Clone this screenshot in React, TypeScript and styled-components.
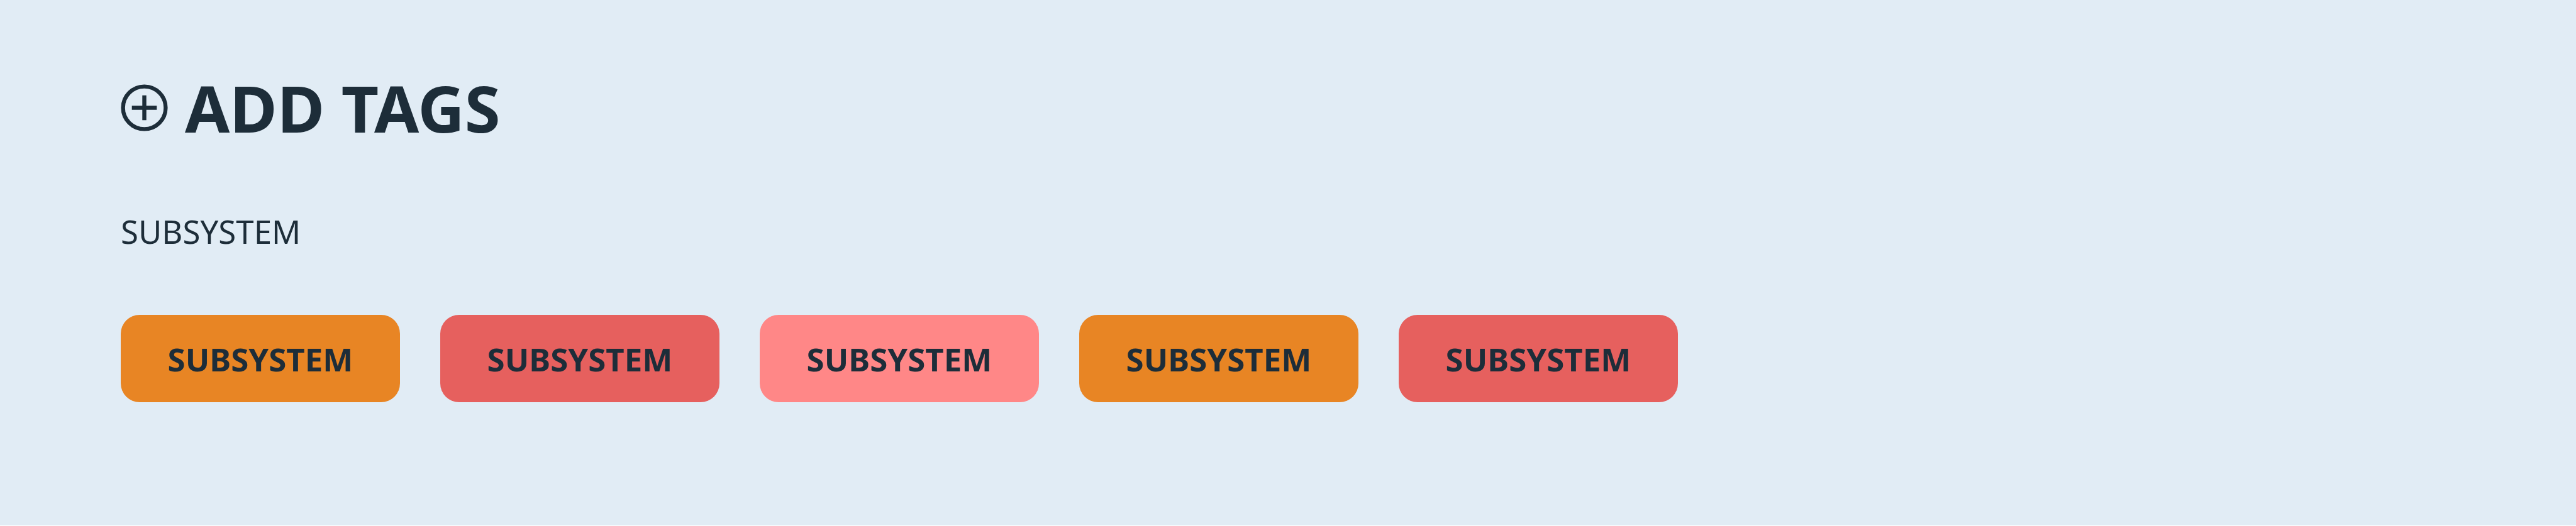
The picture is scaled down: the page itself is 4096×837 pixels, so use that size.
import React from "react";
import styled, { createGlobalStyle } from "styled-components";

const GlobalStyle = createGlobalStyle`
  body { margin: 0; background: #ffffff; }
  * { box-sizing: border-box; }
`;

const Panel = styled.section`
  padding: 117px 192px 196px;
  background: #e1ecf5;
  color: #1d2d39;
  font-family: "Noto Sans", sans-serif;
`;

const AddButton = styled.button`
  display: flex;
  align-items: center;
  gap: 27px;
  padding: 0;
  border: 0;
  background: none;
  color: inherit;
  font: 700 103px/108px "Noto Sans", sans-serif;
  cursor: pointer;
`;

const GroupTitle = styled.h3`
  margin: 107px 0 97px;
  font-size: 51px;
  line-height: 72px;
  font-weight: 400;
`;

const TagRow = styled.div`
  display: flex;
  flex-wrap: wrap;
  gap: 64px;
`;

const Tag = styled.button<{ $color: string }>`
  min-width: 444px;
  height: 139px;
  padding: 0 72px;
  border: 0;
  border-radius: 30px;
  background: ${(p) => p.$color};
  color: inherit;
  font: 700 51px/72px "Noto Sans", sans-serif;
  cursor: pointer;
`;

const PlusIcon = () => (
  <svg width="75" height="75" viewBox="0 0 75 75" fill="none" stroke="currentColor" strokeWidth="6.4" aria-hidden="true">
    <circle cx="37.5" cy="37.5" r="33.9" />
    <path d="M37.5 17.7V57.3M17.7 37.5H57.3" />
  </svg>
);

const tagColors = ["#e88524", "#e6605e", "#ff8787", "#e88524", "#e6605e"];

export default function App() {
  return (
    <>
      <GlobalStyle />
      <Panel>
        <AddButton type="button">
          <PlusIcon />
          ADD TAGS
        </AddButton>
        <GroupTitle>SUBSYSTEM</GroupTitle>
        <TagRow>
          {tagColors.map((color, i) => (
            <Tag key={i} type="button" $color={color}>SUBSYSTEM</Tag>
          ))}
        </TagRow>
      </Panel>
    </>
  );
}
